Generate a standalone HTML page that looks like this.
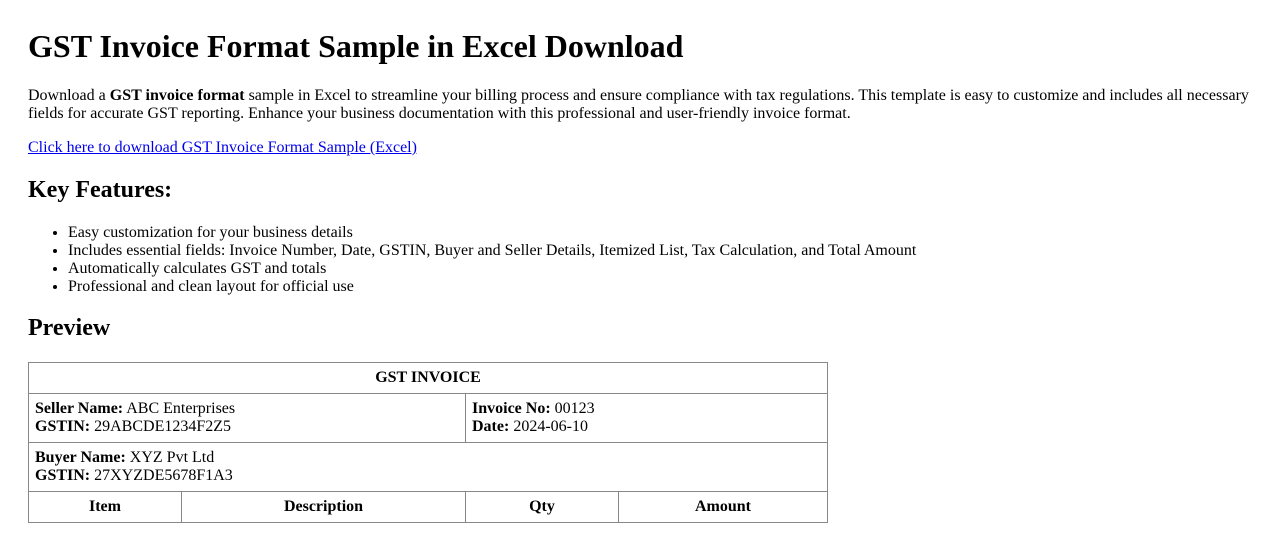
<!DOCTYPE html>
<html><head><meta charset="utf-8"><style>
body{margin:28px;font-family:"Liberation Serif",serif;font-size:16px;line-height:18px;color:#000;background:#fff}
h1{font-size:32px;line-height:37px;margin:0 0 22px}
p{margin:0 0 16px}
h2{font-size:24px;line-height:26px;margin:19px 0 19px}
ul{margin:0;padding-left:40px}
a{color:#00e}
table{border-collapse:collapse;table-layout:fixed;width:799px;margin-top:21px}
td,th{border:1px solid #888;padding:6px;text-align:left;vertical-align:top}
th{text-align:center}
</style></head><body>
<h1>GST Invoice Format Sample in Excel Download</h1>
<p>Download a <b>GST invoice format</b> sample in Excel to streamline your billing process and ensure compliance with tax regulations. This template is easy to customize and includes all necessary fields for accurate GST reporting. Enhance your business documentation with this professional and user-friendly invoice format.</p>
<p><a href="#">Click here to download GST Invoice Format Sample (Excel)</a></p>
<h2 style="margin-top:20px;margin-bottom:21px">Key Features:</h2>
<ul>
<li>Easy customization for your business details</li>
<li>Includes essential fields: Invoice Number, Date, GSTIN, Buyer and Seller Details, Itemized List, Tax Calculation, and Total Amount</li>
<li>Automatically calculates GST and totals</li>
<li>Professional and clean layout for official use</li>
</ul>
<h2 style="margin:19px 0 0">Preview</h2>
<table>
<colgroup><col style="width:153px"><col style="width:284px"><col style="width:153px"><col style="width:209px"></colgroup>
<tr><th colspan="4">GST INVOICE</th></tr>
<tr><td colspan="2"><b>Seller Name:</b> ABC Enterprises<br><b>GSTIN:</b> 29ABCDE1234F2Z5</td><td colspan="2"><b>Invoice No:</b> 00123<br><b>Date:</b> 2024-06-10</td></tr>
<tr><td colspan="4"><b>Buyer Name:</b> XYZ Pvt Ltd<br><b>GSTIN:</b> 27XYZDE5678F1A3</td></tr>
<tr><th>Item</th><th>Description</th><th>Qty</th><th>Amount</th></tr>
</table>
</body></html>
